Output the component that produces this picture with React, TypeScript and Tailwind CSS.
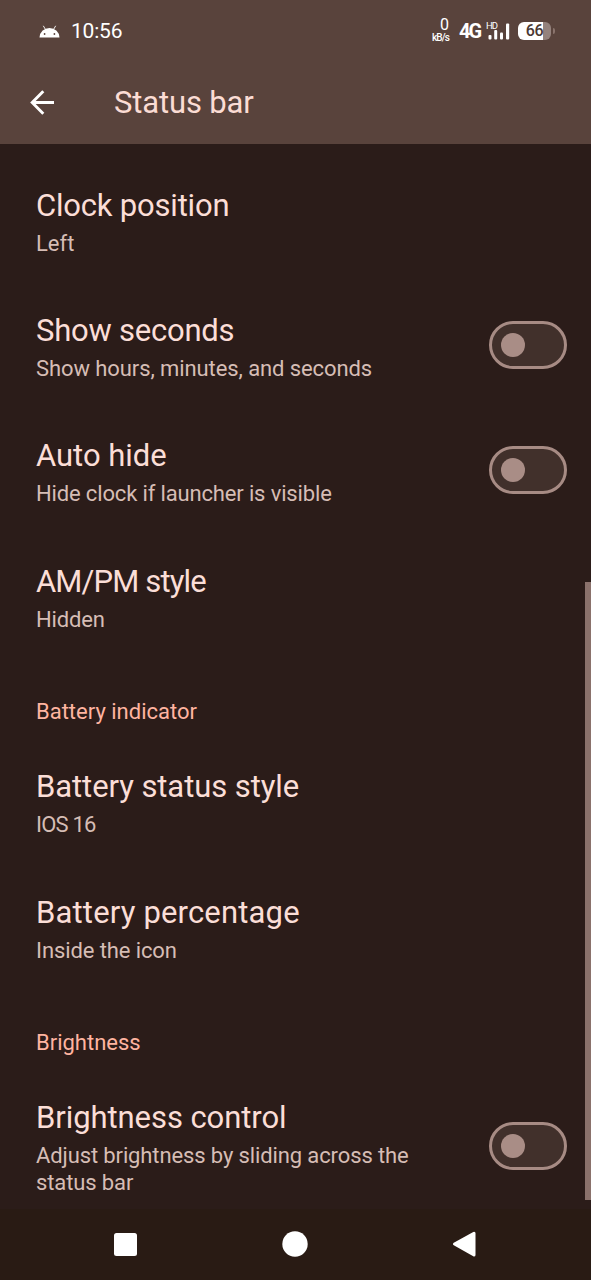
import clsx from 'clsx';

type SettingRowProps = {
  title: string;
  summary: string;
  titleClass?: string;
  summaryClass?: string;
  hasSwitch?: boolean;
  className?: string;
};

function Switch() {
  return (
    <button
      type="button"
      role="switch"
      aria-checked="false"
      className="flex h-12 w-[78.5px] shrink-0 items-center rounded-full border-3 border-[#a78b84] bg-[#41302b] pl-[9px]"
    >
      <span className="size-6 rounded-full bg-[#a98d86]" />
    </button>
  );
}

function SettingRow({
  title,
  summary,
  titleClass,
  summaryClass,
  hasSwitch,
  className = 'h-[125.3px]',
}: SettingRowProps) {
  return (
    <div
      className={clsx(
        'flex shrink-0 items-center justify-between pr-[18px] pl-9',
        className,
      )}
    >
      <div className="flex flex-col gap-[4px] pt-[2px]">
        <h2
          className={clsx(
            'text-[31px] leading-[41px] whitespace-nowrap text-[#fbded7]',
            titleClass,
          )}
        >
          {title}
        </h2>
        <p
          className={clsx(
            'text-[22px] leading-[27px] whitespace-pre text-[#d6bdb5]',
            summaryClass,
          )}
        >
          {summary}
        </p>
      </div>
      {hasSwitch && <Switch />}
    </div>
  );
}

function Category({ title }: { title: string }) {
  return (
    <h3 className="h-[80.5px] shrink-0 pt-10 pl-9 text-[22px] leading-[27px] text-[#ffb4a0]">
      {title}
    </h3>
  );
}

function StatusIcons() {
  return (
    <div className="flex h-6 items-center text-white">
      {/* network speed */}
      <div className="flex w-[18px] flex-col items-end">
        <span className="text-[16px] leading-[12px]">0</span>
        <span className="pt-px text-[10px] leading-[12px] font-medium tracking-[-0.9px]">
          kB/s
        </span>
      </div>
      <span className="ml-[10px] w-[21px] text-[20px] leading-6 font-bold tracking-[-2px]">
        4G
      </span>
      <svg className="ml-[5px]" width="25" height="24" viewBox="0 0 25 24">
        <text x="1" y="10" fontSize="9.5" fill="white" textLength="12">
          HD
        </text>
        <g fill="white">
          <rect x="3.5" y="16" width="3" height="4.5" rx="1" />
          <rect x="9.2" y="11" width="3" height="9.5" rx="1" />
          <rect x="15" y="13.5" width="3" height="7" rx="1" />
          <rect x="21" y="4.5" width="3.2" height="16" rx="1" />
        </g>
      </svg>
      {/* battery */}
      <div className="ml-[8px] flex items-center gap-[2px]">
        <div className="flex h-[18px] w-[33px] items-center justify-center rounded-[6px] bg-linear-to-r from-white from-75% to-[#94827d] to-75% text-[16px] leading-none font-medium tracking-[-0.4px] text-[#4a3833]">
          66
        </div>
        <span className="h-[6px] w-[2px] rounded-r-full bg-[#8a736c]" />
      </div>
    </div>
  );
}

export default function App() {
  return (
    <div className="flex h-[1280px] w-[591px] flex-col overflow-hidden bg-[#2b1c19] font-['Roboto','Liberation_Sans',sans-serif]">
      {/* header */}
      <header className="h-36 shrink-0 bg-[#59433c]">
        <div className="flex h-[62px] items-center justify-between pr-[36px] pl-[39px]">
          <div className="flex items-center gap-[11px] text-white">
            <svg width="21" height="13" viewBox="0 0 21 13">
              <path
                d="M6.2 4 4.3.8M14.8 4l1.9-3.2"
                fill="none"
                stroke="white"
                strokeWidth=".9"
              />
              <path d="M.5 12.5a10 9.6 0 0 1 20 0z" fill="white" />
              <circle cx="5.6" cy="9" r=".9" fill="#59433c" />
              <circle cx="15.4" cy="9" r=".9" fill="#59433c" />
            </svg>
            <span className="text-[21px] leading-6 tracking-[-0.2px]">
              10:56
            </span>
          </div>
          <StatusIcons />
        </div>
        <div className="flex h-20 items-center pl-[30px]">
          <svg
            width="25"
            height="25"
            viewBox="0 0 25 25"
            fill="none"
            stroke="white"
            strokeWidth="2.9"
          >
            <path d="M24 12.5H2.5M13.3 1.3 2.2 12.5l11.1 11.2" />
          </svg>
          <h1 className="ml-[59px] pt-[2px] text-[31px] leading-10 tracking-[-0.15px] text-[#fbdcd4]">
            Status bar
          </h1>
        </div>
      </header>

      {/* settings list */}
      <main className="flex min-h-0 flex-1 overflow-hidden">
        <div className="flex w-[585px] shrink-0 flex-col pt-[13px]">
          <SettingRow
            title="Clock position"
            summary="Left"
            titleClass="tracking-[-0.2px]"
          />
          <SettingRow
            title="Show seconds"
            summary="Show hours, minutes, and seconds"
            titleClass="tracking-[-0.23px]"
            summaryClass="tracking-[-0.09px]"
            hasSwitch
          />
          <SettingRow
            title="Auto hide"
            summary="Hide clock if launcher is visible"
            titleClass="tracking-[-0.02px]"
            summaryClass="tracking-[-0.15px]"
            hasSwitch
          />
          <SettingRow
            title="AM/PM style"
            summary="Hidden"
            titleClass="tracking-[-0.85px]"
            summaryClass="tracking-[-0.15px]"
          />

          <Category title="Battery indicator" />
          <SettingRow
            title="Battery status style"
            summary="IOS 16"
            titleClass="tracking-[-0.08px]"
            summaryClass="tracking-[-0.8px]"
          />
          <SettingRow
            title="Battery percentage"
            summary="Inside the icon"
            titleClass="tracking-[0.17px]"
            summaryClass="tracking-[-0.1px]"
          />

          <Category title="Brightness" />
          <SettingRow
            title="Brightness control"
            summary={'Adjust brightness by sliding across the\nstatus bar'}
            titleClass="tracking-[-0.07px]"
            summaryClass="tracking-[-0.12px]"
            hasSwitch
            className="h-[152px]"
          />
        </div>
        {/* scrollbar */}
        <div className="mt-[438px] h-[618px] w-1.5 bg-[#8a716b]" />
      </main>

      {/* navigation bar */}
      <nav className="h-[71px] shrink-0 bg-[#291b14]">
        <svg width="591" height="71" viewBox="0 0 591 71" fill="white">
          <rect x="114" y="24" width="23" height="23" rx="2.5" />
          <circle cx="295" cy="35" r="12.7" />
          <path
            d="M454.5 35 474 24.2v21.8z"
            stroke="white"
            strokeWidth="3"
            strokeLinejoin="round"
          />
        </svg>
      </nav>
    </div>
  );
}
